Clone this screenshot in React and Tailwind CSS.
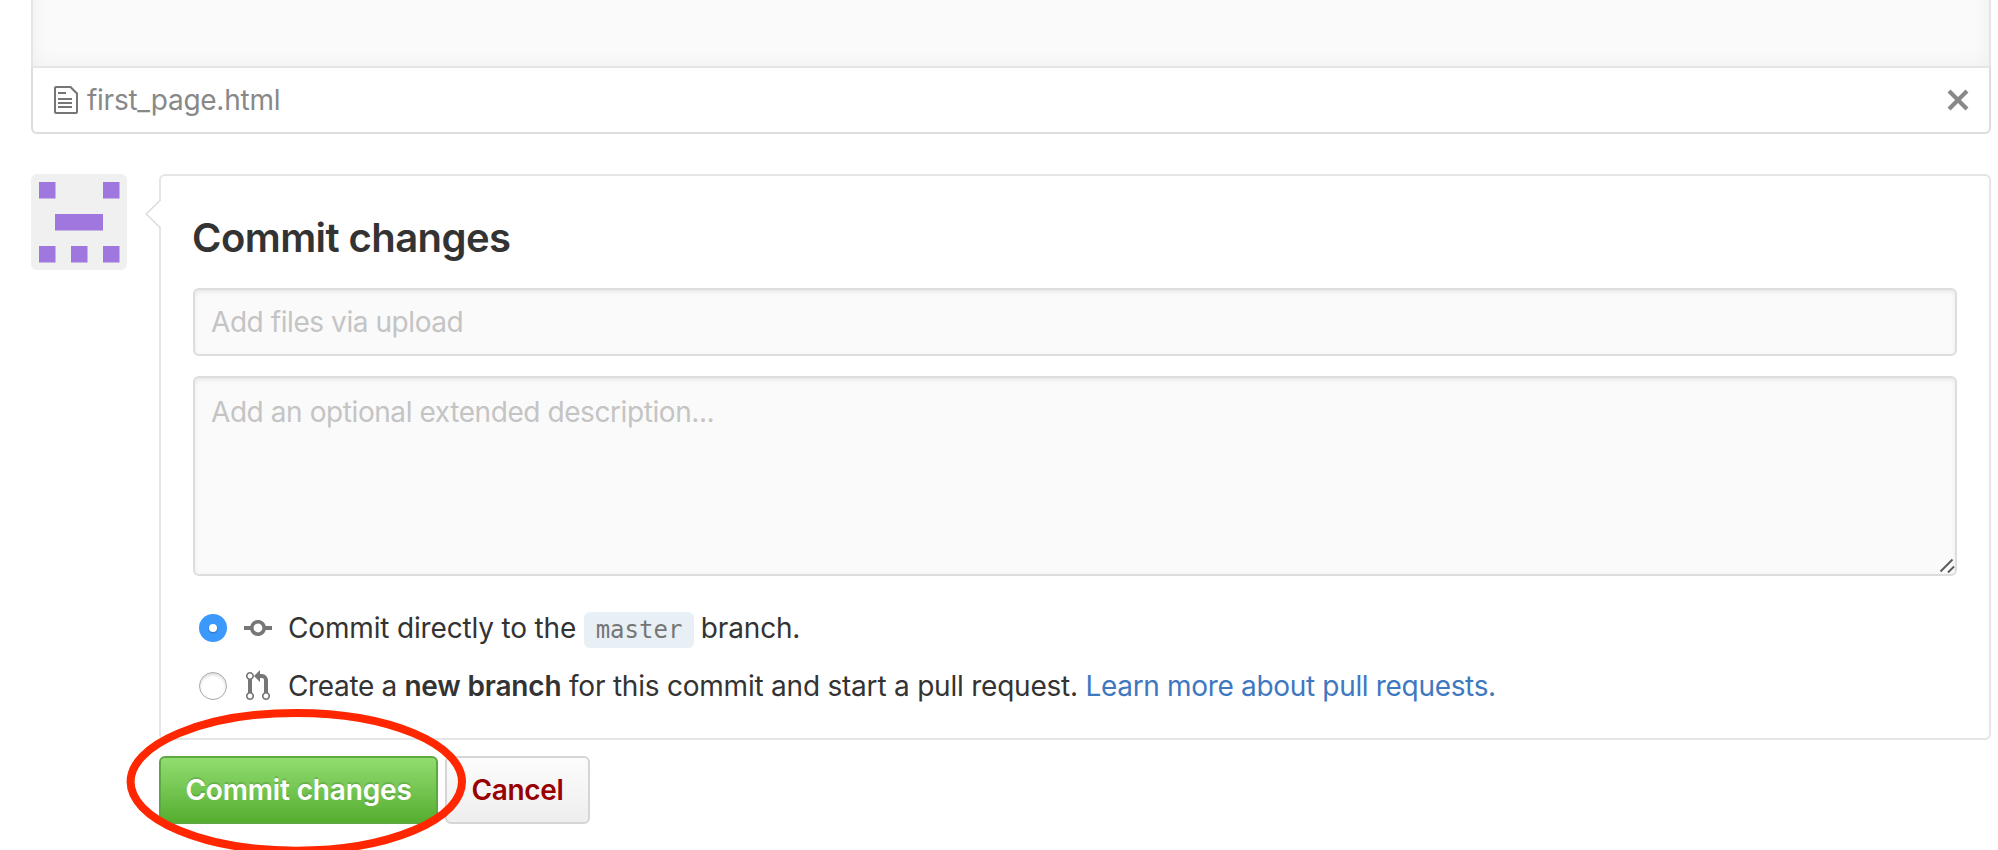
function FileTextIcon() {
  return (
    <svg viewBox="0 0 12 16" className="h-8 w-6 shrink-0 fill-[#767676]">
      <path d="M6 5H2V4h4v1zM2 8h7V7H2v1zm0 2h7V9H2v1zm0 2h7v-1H2v1zm10-7.5V14c0 .55-.45 1-1 1H1c-.55 0-1-.45-1-1V2c0-.55.45-1 1-1h7.5L12 4.5zM11 5L8 2H1v12h10V5z" />
    </svg>
  );
}

function CloseIcon() {
  return (
    <svg viewBox="0 0 12 16" className="h-8 w-6 shrink-0 fill-[#888]">
      <path d="M7.48 8l3.75 3.75-1.48 1.48L6 9.48l-3.75 3.75-1.48-1.48L4.52 8 .77 4.25l1.48-1.48L6 6.52l3.75-3.75 1.48 1.48L7.48 8z" />
    </svg>
  );
}

function CommitIcon() {
  return (
    <svg viewBox="0 0 14 16" className="h-8 w-7 fill-[#767676]">
      <path d="M10.86 7c-.45-1.72-2-3-3.86-3-1.86 0-3.41 1.28-3.86 3H0v2h3.14c.45 1.72 2 3 3.86 3 1.86 0 3.41-1.28 3.86-3H14V7h-3.14zM7 10.2c-1.22 0-2.2-.98-2.2-2.2 0-1.22.98-2.2 2.2-2.2 1.22 0 2.2.98 2.2 2.2 0 1.22-.98 2.2-2.2 2.2z" />
    </svg>
  );
}

function PullRequestIcon() {
  return (
    <svg viewBox="0 0 12 16" className="h-8 w-6 fill-[#767676]">
      <path d="M11 11.28V5c-.03-.78-.34-1.47-.94-2.06C9.46 2.35 8.78 2.03 8 2H7V0L4 3l3 3V4h1c.27.02.48.11.69.31.21.2.3.42.31.69v6.28A1.993 1.993 0 0 0 10 15a1.993 1.993 0 0 0 1-3.72zm-1 2.92c-.66 0-1.2-.55-1.2-1.2 0-.65.55-1.2 1.2-1.2.65 0 1.2.55 1.2 1.2 0 .65-.55 1.2-1.2 1.2zM4 3c0-1.11-.89-2-2-2a1.993 1.993 0 0 0-1 3.72v6.56A1.993 1.993 0 0 0 2 15a1.993 1.993 0 0 0 1-3.72V4.72c.59-.34 1-.98 1-1.72zm-.8 10c0 .66-.55 1.2-1.2 1.2-.65 0-1.2-.55-1.2-1.2 0-.65.55-1.2 1.2-1.2.65 0 1.2.55 1.2 1.2zM2 4.2C1.34 4.2.8 3.65.8 3c0-.65.55-1.2 1.2-1.2.65 0 1.2.55 1.2 1.2 0 .65-.55 1.2-1.2 1.2z" />
    </svg>
  );
}

function Avatar() {
  return (
    <svg viewBox="0 0 96 96" className="size-24 shrink-0 rounded-md bg-[#f0f0f0] fill-[#a077de]">
      <rect x="8" y="8" width="16.5" height="16.5" />
      <rect x="72" y="8" width="16.5" height="16.5" />
      <rect x="24" y="40" width="48" height="16.5" />
      <rect x="8" y="72" width="16.5" height="16.5" />
      <rect x="40" y="72" width="16.5" height="16.5" />
      <rect x="72" y="72" width="16.5" height="16.5" />
    </svg>
  );
}

function Radio({ checked }) {
  return checked ? (
    <span className="flex size-7 shrink-0 items-center justify-center rounded-full bg-[#3b99fc]">
      <span className="size-2 rounded-full bg-white shadow-[0_1px_2px_rgba(0,0,0,0.3)]" />
    </span>
  ) : (
    <span className="size-7 shrink-0 rounded-full border border-[#a9a9a9] bg-white shadow-[inset_0_2px_3px_rgba(0,0,0,0.14)]" />
  );
}

function Option({ checked, icon, children }) {
  return (
    <label className="flex h-[58px] items-center whitespace-pre">
      <Radio checked={checked} />
      <span className="ml-[15px] flex w-[32px] justify-center">{icon}</span>
      <span className="ml-[14px]">{children}</span>
    </label>
  );
}

export default function App() {
  return (
    <div className="relative h-[850px] w-[1998px] overflow-hidden bg-white pr-[7px] pl-[31px] font-[Inter,'Liberation_Sans',sans-serif] text-[28px] leading-10 text-[#333]">
      <div className="flex h-[68px] items-end overflow-hidden">
        <div className="h-[168px] flex-1 border-x-2 border-b-2 border-[#e5e5e5] bg-[#fafafa] shadow-[inset_0_0_20px_rgba(0,0,0,0.05)]" />
      </div>
      <div className="flex h-[66px] items-center justify-between rounded-b-md border-x-2 border-b-2 border-[#ddd] pr-[19px] pl-[21px]">
        <div className="flex items-center gap-[9px] tracking-[-0.26px] text-[#888]">
          <FileTextIcon />
          first_page.html
        </div>
        <CloseIcon />
      </div>

      <div className="mt-10 flex gap-8">
        <Avatar />
        <section className="relative h-[566px] flex-1 rounded-md border-2 border-[#e5e5e5] pt-10 pr-8 pl-8">
          <svg viewBox="0 0 18 30" className="absolute top-[23px] -left-4 h-[30px] w-[18px]">
            <path d="M18 1H16L2 15L16 29H18Z" fill="#fff" />
            <path d="M15.5 1L1.2 15L15.5 29" fill="none" stroke="#ddd" strokeWidth="1.6" />
          </svg>
          <h2 className="-ml-px text-[40px] leading-[44px] font-semibold tracking-[-0.572px]">Commit changes</h2>
          <div className="mt-7 flex h-[68px] items-center rounded-md border-2 border-[#ddd] bg-[#fafafa] px-4 tracking-[-0.43px] text-[#c4c4c4] shadow-[inset_0_2px_4px_rgba(0,0,0,0.075)]">
            Add files via upload
          </div>
          <div className="relative mt-5 h-[200px] rounded-md border-2 border-[#ddd] bg-[#fafafa] px-4 py-[14px] tracking-[-0.42px] text-[#c4c4c4] shadow-[inset_0_2px_4px_rgba(0,0,0,0.075)]">
            Add an optional extended description...
            <svg viewBox="0 0 16 16" className="absolute right-0 bottom-0 size-4" stroke="#5a5a5a" strokeWidth="1.9">
              <path d="M1.5 13.5L13.5 1.5M9 14.5L15 8.5" />
            </svg>
          </div>
          <div className="mt-[23px] pl-[6px]">
            <Option checked icon={<CommitIcon />}>
              <span className="tracking-[-0.162px]">Commit directly to the</span>
              <code className="mr-[7px] ml-2 inline-block h-9 rounded-md bg-[#e8f0f5] px-[11.5px] align-middle font-['DejaVu_Sans_Mono',monospace] text-[24px] leading-9 text-[#767676]">master</code>
              <span className="tracking-[-0.167px]">branch.</span>
            </Option>
            <Option icon={<PullRequestIcon />}>
              <span className="tracking-[-0.35px]">Create a </span>
              <strong className="font-semibold tracking-[-0.185px]">new branch</strong>
              <span className="tracking-[-0.219px]"> for this commit and start a pull request. </span>
              <a className="tracking-[-0.327px] text-[#4078c0]">Learn more about pull requests.</a>
            </Option>
          </div>
        </section>
      </div>

      <div className="mt-4 ml-32 flex gap-[7px] font-semibold">
        <button className="h-[68px] w-[279px] rounded-md border-2 border-[#5ca941] bg-linear-to-b from-[#91dd70] to-[#55ae2e] tracking-[-0.162px] text-white [text-shadow:0_-2px_0_rgba(0,0,0,0.15)]">
          Commit changes
        </button>
        <button className="h-[68px] w-[145px] rounded-md border-2 border-[#d5d5d5] bg-linear-to-b from-[#fcfcfc] to-[#eee] tracking-[-0.341px] text-[#900]">
          Cancel
        </button>
      </div>

      <svg viewBox="0 0 346 150" className="absolute top-[706px] left-[124px] h-[150px] w-[346px]">
        <ellipse cx="172.3" cy="75.8" rx="165.7" ry="68.9" fill="none" stroke="#ff2600" strokeWidth="8" />
      </svg>
    </div>
  );
}
